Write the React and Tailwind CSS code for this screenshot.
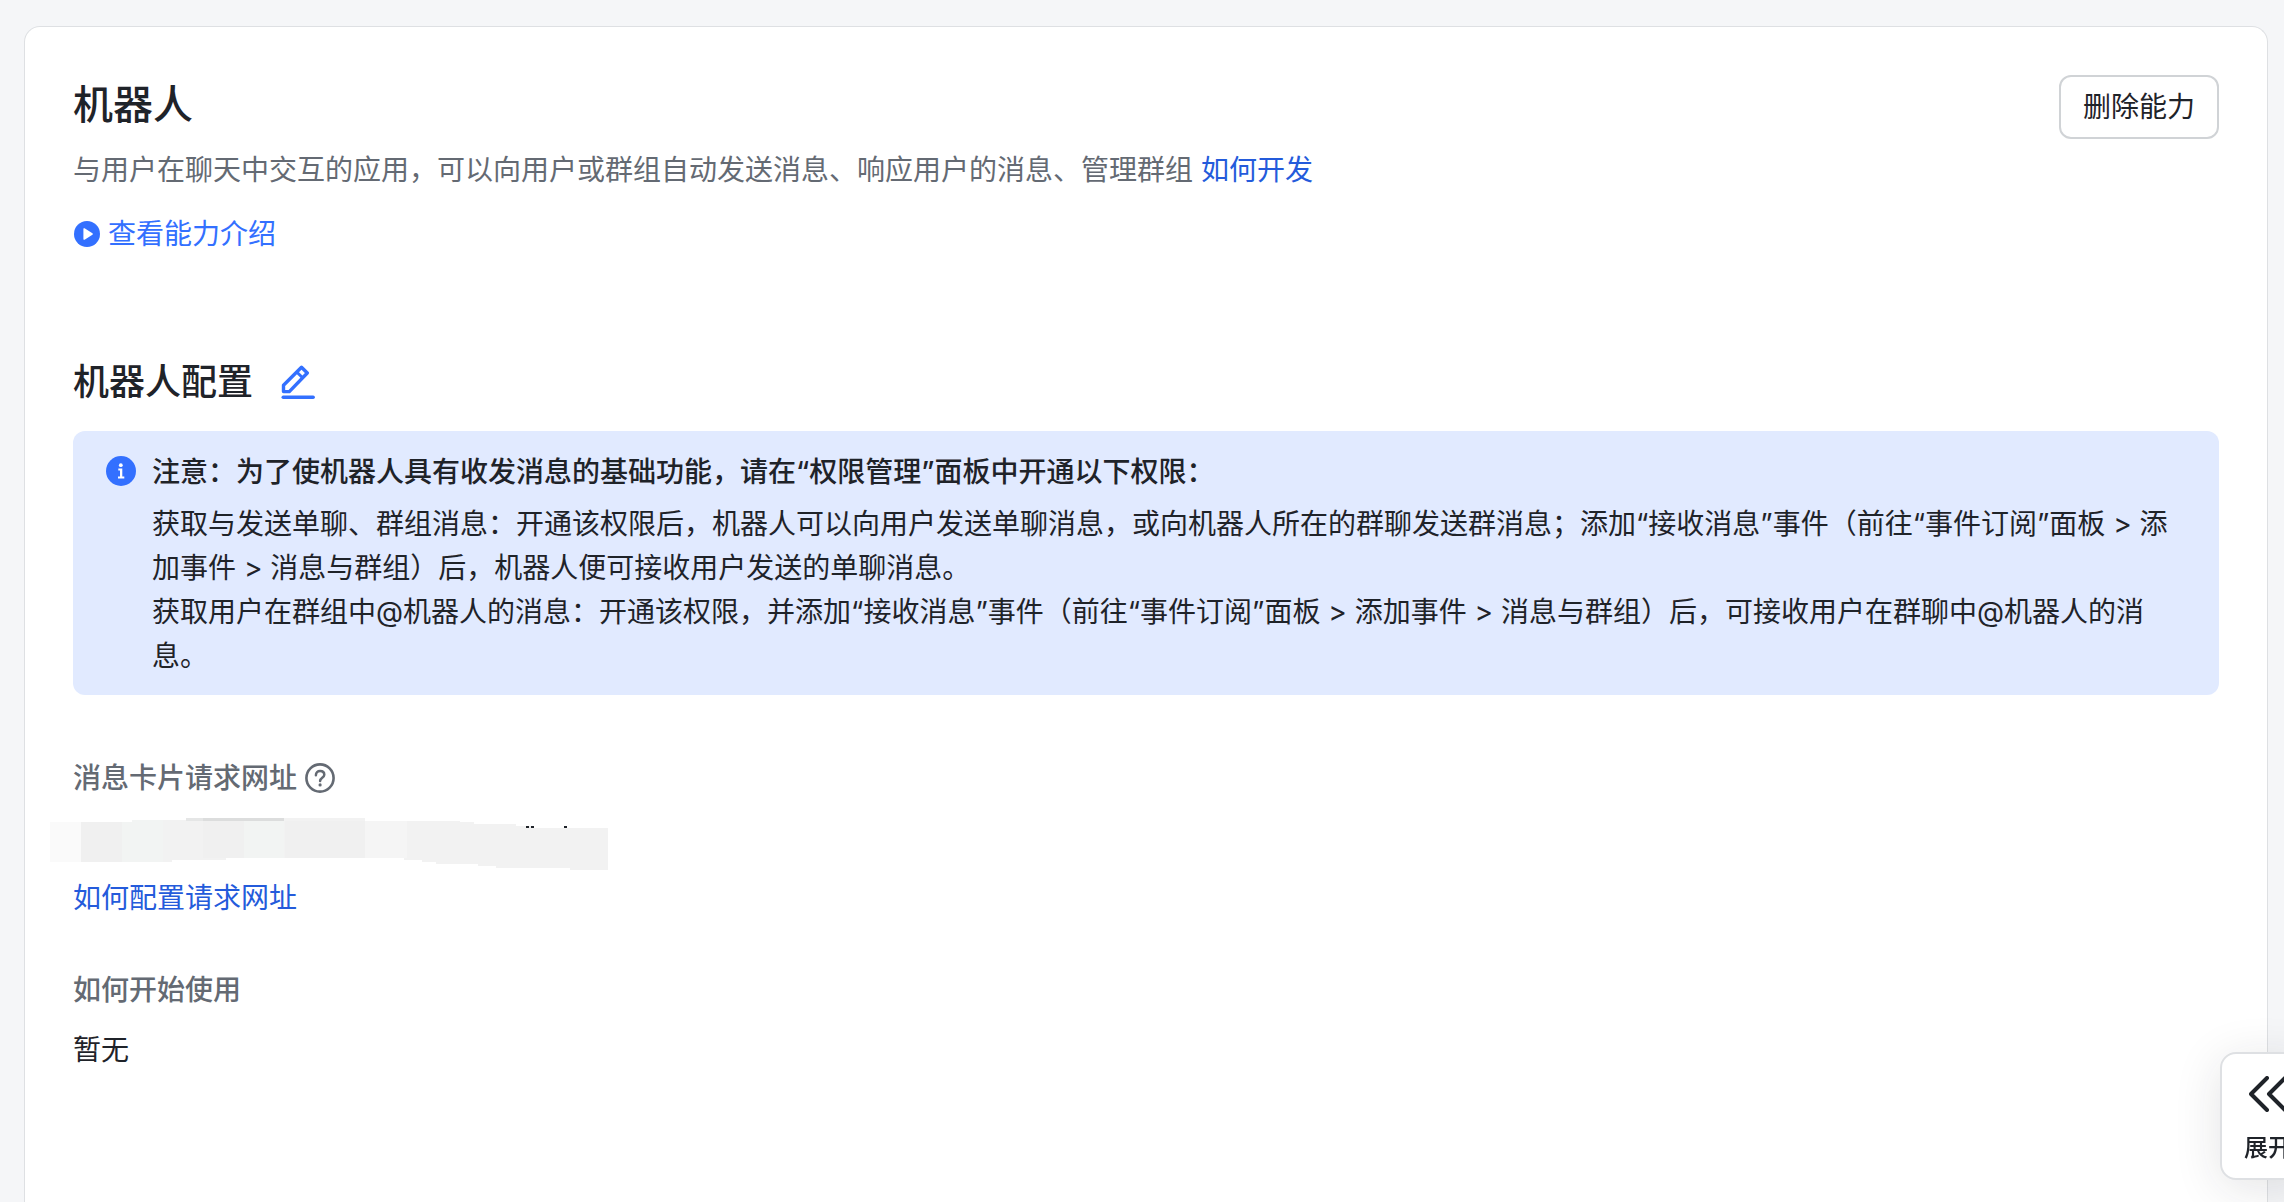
const link = "text-[#245bdb] hover:underline";

function PlayIcon() {
  return (
    <svg viewBox="0 0 26 26" className="size-[26px] shrink-0" aria-hidden="true">
      <circle cx="13" cy="13" r="13" fill="#3370ff" />
      <path d="M9.4 8v10a.8.8 0 0 0 1.2.7l7.8-5a.8.8 0 0 0 0-1.4l-7.8-5A.8.8 0 0 0 9.4 8z" fill="#fff" />
    </svg>
  );
}

function EditIcon() {
  return (
    <svg viewBox="0 0 34 34" className="size-[34px]" fill="none" stroke="#3370ff" aria-hidden="true">
      <path d="M2.5 26.6v-6.4L20.5 2.2l5.8 5.8L8.3 26.6z" strokeWidth="3.4" strokeLinejoin="round" />
      <path d="M16 7.2l5.6 5.6" strokeWidth="3" />
      <path d="M2.2 32.2h30" strokeWidth="3.4" strokeLinecap="round" />
    </svg>
  );
}

function InfoIcon() {
  return (
    <svg viewBox="0 0 30 30" className="mt-1.5 size-[30px] shrink-0" aria-hidden="true">
      <circle cx="15" cy="15" r="15" fill="#3370ff" />
      <circle cx="14.8" cy="9.2" r="1.9" fill="#fff" />
      <path d="M12.3 12.6h4v8h2v1.9h-6.3v-1.9h2v-6.1h-1.7z" fill="#fff" />
    </svg>
  );
}

function HelpIcon() {
  return (
    <svg viewBox="0 0 30 30" className="size-[30px]" fill="none" stroke="#646a73" aria-hidden="true">
      <circle cx="15" cy="15" r="13.6" strokeWidth="2.6" />
      <path d="M10.9 12.2c0-2.6 1.8-4.2 4.2-4.2s4.2 1.5 4.2 3.8c0 3-4.2 3.1-4.2 6.2" strokeWidth="2.5" strokeLinecap="round" />
      <circle cx="15.1" cy="21.9" r="1.6" fill="#646a73" stroke="none" />
    </svg>
  );
}

function MaskedUrl() {
  return (
    <svg viewBox="0 0 558 52" className="-ml-[23px] block h-[52px] w-[558px]" role="img" aria-label="已隐藏的请求网址">
      <path d="M0 4h82V2h54V0h179v3h95v1h14v2h42v2h18v2h76v2h12v40h-52v-2h-74v-2h-18v-2h-42v-2h-14v-2h-18v-2H176v2h-54v2H0z" fill="#f2f2f2" />
      <path d="M0 4h31v40H0z" fill="#fafafa" />
      <path d="M31 4h41v40H31zM153 3h41v37h-41zM235 3h80v37h-80z" fill="#f0f0f0" />
      <path d="M72 4h10V2h31v42H72zM194 3h40v37h-40z" fill="#f2f4f3" />
      <path d="M136 0h98v3h-98z" fill="#e5e6e6" />
      <path d="M153 0h81v3h-81z" fill="#dcdddd" />
      <path d="M315 3h42v37h-42z" fill="#f5f5f5" />
      <path d="M476 8h3v2h-3zM481 8h3v2h-3zM514 8h3v2h-3z" fill="#1f2329" />
    </svg>
  );
}

export default function App() {
  return (
    <div className="flex min-h-screen flex-col overflow-x-hidden bg-[#f5f6f8] pt-[26px] pr-4 pl-6 text-[28px] leading-[44px] text-[#1f2329] [font-family:Inter,'Noto_Sans_CJK_SC',sans-serif]" lang="zh-CN">
      <main className="flex-1 rounded-t-2xl border border-b-0 border-[#dee0e3] bg-white px-12 pt-12">
        <header className="flex items-start justify-between">
          <div>
            <h1 className="text-[40px] leading-[60px] font-medium">机器人</h1>
            <p className="mt-[13px] text-[#646a73]">
              与用户在聊天中交互的应用，可以向用户或群组自动发送消息、响应用户的消息、管理群组{" "}
              <a href="#develop" className={link}>如何开发</a>
            </p>
            <a href="#intro" className="mt-5 flex w-fit items-center gap-2 pl-px text-[#3370ff]">
              <PlayIcon />
              查看能力介绍
            </a>
          </div>
          <button type="button" className="h-16 w-40 rounded-xl border-2 border-[#d0d3d6] bg-white">删除能力</button>
        </header>

        <section className="mt-[99px]">
          <div className="flex items-center gap-7">
            <h2 className="text-[36px] leading-[54px] font-medium">机器人配置</h2>
            <button type="button" aria-label="编辑机器人配置"><EditIcon /></button>
          </div>

          <div className="mt-[22px] flex gap-4 rounded-xl bg-[#e1eaff] pt-[19px] pr-8 pb-[17px] pl-[33px]">
            <InfoIcon />
            <div>
              <p className="mb-2 font-medium">注意：为了使机器人具有收发消息的基础功能，请在“权限管理”面板中开通以下权限：</p>
              <p>获取与发送单聊、群组消息：开通该权限后，机器人可以向用户发送单聊消息，或向机器人所在的群聊发送群消息；添加“接收消息”事件（前往“事件订阅”面板 &gt; 添加事件 &gt; 消息与群组）后，机器人便可接收用户发送的单聊消息。</p>
              <p>获取用户在群组中@机器人的消息：开通该权限，并添加“接收消息”事件（前往“事件订阅”面板 &gt; 添加事件 &gt; 消息与群组）后，可接收用户在群聊中@机器人的消息。</p>
            </div>
          </div>

          <h3 className="mt-[61px] flex items-center gap-2 font-medium text-[#646a73]">
            消息卡片请求网址
            <HelpIcon />
          </h3>
          <div className="mt-[18px]"><MaskedUrl /></div>
          <a href="#request-url" className={`mt-1.5 block w-fit ${link}`}>如何配置请求网址</a>

          <h3 className="mt-12 font-medium text-[#646a73]">如何开始使用</h3>
          <p className="mt-4">暂无</p>
        </section>
      </main>

      <button type="button" className="fixed -right-7 bottom-[22px] flex h-32 w-[92px] flex-col items-center gap-[18px] rounded-2xl border-2 border-[#dee0e3] bg-white pt-[22px] pl-1 shadow-[0_8px_48px_rgba(31,35,41,0.12)]">
        <svg viewBox="0 0 38 36" className="h-9 w-[38px]" fill="none" stroke="#1f2329" strokeWidth="4" strokeLinecap="round" strokeLinejoin="round" aria-hidden="true">
          <path d="M18 2 2 18l16 16M36 2 20 18l16 16" />
        </svg>
        <span className="text-[24px] leading-9 font-medium">展开</span>
      </button>
    </div>
  );
}
